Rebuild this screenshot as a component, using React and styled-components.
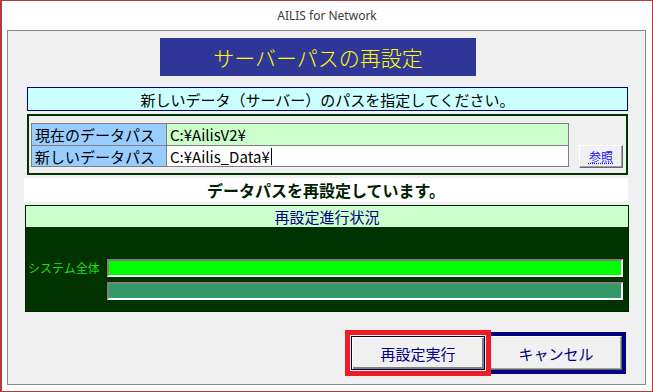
import React from "react";
import styled, { createGlobalStyle } from "styled-components";

const GlobalStyle = createGlobalStyle`
  html, body {
    margin: 0;
    padding: 0;
    background: #ffffff;
  }
  * {
    box-sizing: border-box;
  }
`;

const jp = `"Noto Sans CJK JP", "Noto Sans", sans-serif`;

const Window = styled.div`
  width: 653px;
  height: 392px;
  border: 1px solid #b23b3b;
  border-left-width: 2px;
  background: #ffffff;
  display: flex;
  flex-direction: column;
  font-family: ${jp};
`;

const TitleBar = styled.div`
  height: 29px;
  display: flex;
  align-items: center;
  justify-content: center;
  font-family: "Noto Sans", sans-serif;
  font-size: 12px;
  color: #3c3c3c;
`;

const Panel = styled.div`
  margin-left: 5px;
  width: 639px;
  height: 355px;
  border: 1px solid #8a8a8a;
  background: #f0f0f0;
  display: flex;
  flex-direction: column;
`;

const Heading = styled.div`
  margin: 7px 0 0 152px;
  width: 316px;
  height: 38px;
  background: #2f3698;
  color: #ffff00;
  font-size: 21px;
  font-weight: 300;
  display: flex;
  align-items: center;
  justify-content: center;
  line-height: 1;
`;

const Notice = styled.div`
  margin: 11px 0 0 19px;
  width: 601px;
  height: 24px;
  border: 1px solid #000080;
  background: #ccffff;
  color: #000000;
  font-size: 15px;
  display: flex;
  align-items: center;
  justify-content: center;
  line-height: 1;
`;

const Group = styled.div`
  margin: 3px 0 0 19px;
  width: 601px;
  height: 61px;
  border: 2px solid #003300;
  padding: 8px 0 0 2px;
  display: flex;
  align-items: flex-end;
  gap: 10px;
`;

const PathTable = styled.div`
  width: 538px;
  display: grid;
  grid-template-columns: 135px 1fr;
  border: 1px solid #808080;
  margin-bottom: 6px;
`;

const Cell = styled.div`
  height: 21px;
  display: flex;
  align-items: center;
  padding-left: 3px;
  font-size: 15px;
  line-height: 1;
  color: #000000;
  background: ${(p) => p.$bg};
  border-right: ${(p) => (p.$label ? "1px solid #808080" : "none")};
  border-top: ${(p) => (p.$second ? "1px solid #808080" : "none")};
`;

const Caret = styled.span`
  display: inline-block;
  width: 1px;
  height: 17px;
  background: #000000;
  margin-left: 1px;
`;

const SmallButton = styled.button`
  width: 44px;
  height: 23px;
  margin-bottom: 5px;
  padding: 0;
  background: #f0f0f0;
  border: 1px solid;
  border-color: #ffffff #696969 #696969 #ffffff;
  box-shadow: inset -1px -1px 0 #a0a0a0;
  color: #1010ff;
  font-family: ${jp};
  font-size: 12px;
  line-height: 1;
  text-decoration: underline dotted;
`;

const Status = styled.div`
  margin: 3px 0 0 16px;
  width: 604px;
  height: 24px;
  background: #ffffff;
  color: #002200;
  font-weight: 700;
  font-size: 16px;
  display: flex;
  align-items: center;
  justify-content: center;
  line-height: 1;
`;

const Progress = styled.div`
  margin: 3px 0 0 17px;
  width: 604px;
  height: 107px;
  background: #003300;
  border: 1px solid #002200;
  display: flex;
  flex-direction: column;
`;

const ProgressHeader = styled.div`
  height: 21px;
  background: #ccffcc;
  color: #000080;
  font-size: 15px;
  display: flex;
  align-items: center;
  justify-content: center;
  line-height: 1;
`;

const Bars = styled.div`
  margin-top: 32px;
  display: grid;
  grid-template-columns: 79px 516px;
  row-gap: 5px;
  align-items: center;
  padding-left: 2px;
`;

const BarLabel = styled.div`
  color: #22dd22;
  font-size: 12px;
  line-height: 1;
  white-space: nowrap;
`;

const Bar = styled.div`
  grid-column: 2;
  height: 18px;
  border: 2px solid;
  border-color: #808080 #ffffff #ffffff #808080;
  background: ${(p) => p.$fill};
`;

const Actions = styled.div`
  margin: 18px 0 0 337px;
  display: flex;
  align-items: center;
`;

const Focus = styled.div`
  border: 5px solid ${(p) => p.$color};
  padding: ${(p) => p.$pad};
  position: relative;
  z-index: ${(p) => p.$z};
  display: flex;
`;

const ActionButton = styled.button`
  width: ${(p) => p.$w}px;
  height: 34px;
  padding: 0;
  background: #f0f0f0;
  border: 1px solid;
  border-color: ${(p) =>
    p.$framed ? "#000040" : "#ffffff #696969 #696969 #ffffff"};
  box-shadow: ${(p) =>
    p.$framed
      ? "inset 1px 1px 0 #ffffff, inset -2px -2px 0 #808080"
      : "inset -1px -1px 0 #a0a0a0"};
  color: #000080;
  font-family: ${jp};
  font-size: 15px;
  line-height: 1;
`;

const CancelWrap = styled.div`
  border: 4px solid #000080;
  border-left: none;
  margin-left: -1px;
  display: flex;
`;

export default function App() {
  return (
    <>
      <GlobalStyle />
      <Window>
        <TitleBar>AILIS for Network</TitleBar>
        <Panel>
          <Heading>サーバーパスの再設定</Heading>
          <Notice>新しいデータ（サーバー）のパスを指定してください。</Notice>
          <Group>
            <PathTable>
              <Cell $label $bg="#99ccff">現在のデータパス</Cell>
              <Cell $bg="#ccffcc">C:¥AilisV2¥</Cell>
              <Cell $label $second $bg="#99ccff">新しいデータパス</Cell>
              <Cell $second $bg="#ffffff">
                C:¥Ailis_Data¥<Caret />
              </Cell>
            </PathTable>
            <SmallButton>参照</SmallButton>
          </Group>
          <Status>データパスを再設定しています。</Status>
          <Progress>
            <ProgressHeader>再設定進行状況</ProgressHeader>
            <Bars>
              <BarLabel>システム全体</BarLabel>
              <Bar $fill="#00ff00" />
              <Bar $fill="#339966" />
            </Bars>
          </Progress>
          <Actions>
            <Focus $color="#ee1c24" $pad="1px" $z={1}>
              <ActionButton $framed $w={134}>
                再設定実行
              </ActionButton>
            </Focus>
            <CancelWrap>
              <ActionButton $w={132}>キャンセル</ActionButton>
            </CancelWrap>
          </Actions>
        </Panel>
      </Window>
    </>
  );
}
